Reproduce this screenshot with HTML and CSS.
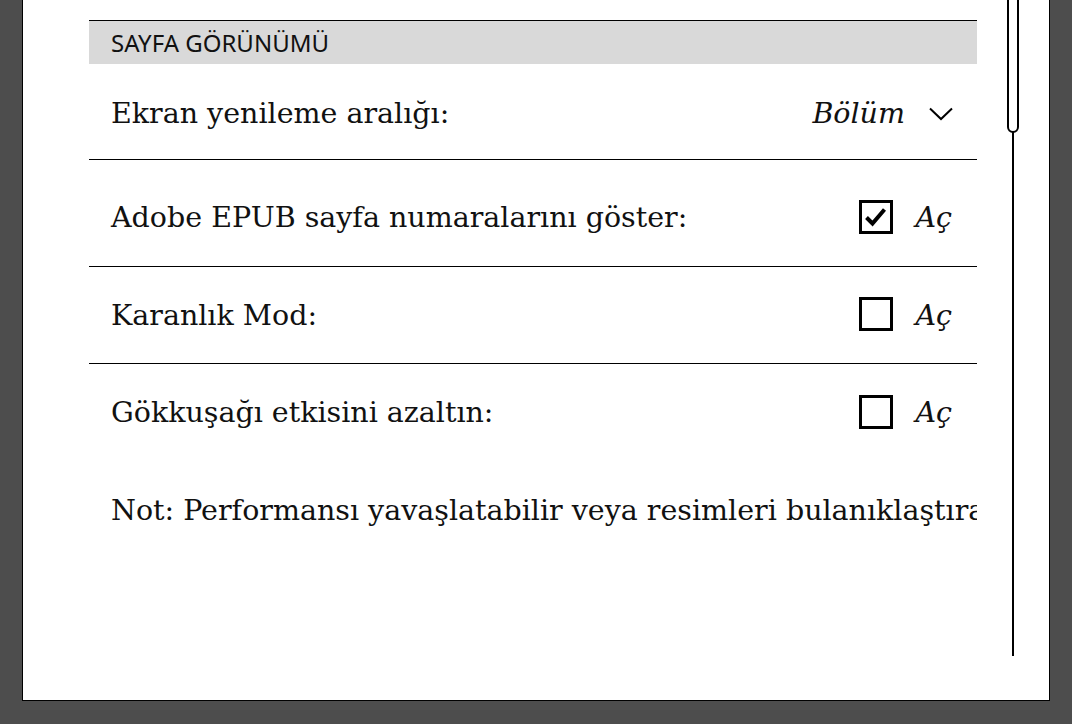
FILE: index.html
```
<!DOCTYPE html>
<html lang="tr">
<head>
    <meta charset="UTF-8" />
    <title>Sayfa Görünümü</title>
    <link rel="stylesheet" href="styles.css">
</head>
<body>

<div class="panel">
    <div class="content">
        <!-- Section header -->
        <div class="section-head">SAYFA GÖRÜNÜMÜ</div>

        <div class="row row-first">
            <span class="label">Ekran yenileme aralığı:</span>
            <span class="select">
                <span class="value">Bölüm</span>
                <svg class="chevron" width="24" height="14" viewBox="0 0 24 14">
                    <polyline points="1,1.5 12,12 23,1.5" fill="none" stroke="#000" stroke-width="2"/>
                </svg>
            </span>
        </div>

        <div class="row row-tall">
            <span class="label">Adobe EPUB sayfa numaralarını göster:</span>
            <span class="toggle">
                <span class="box">
                    <svg width="28" height="28" viewBox="0 0 28 28">
                        <polyline points="4.5,14.5 10.5,20.5 22.5,6.5" fill="none" stroke="#000" stroke-width="4"/>
                    </svg>
                </span>
                <span class="value">Aç</span>
            </span>
        </div>

        <div class="row">
            <span class="label">Karanlık Mod:</span>
            <span class="toggle">
                <span class="box"></span>
                <span class="value">Aç</span>
            </span>
        </div>

        <div class="row no-line">
            <span class="label">Gökkuşağı etkisini azaltın:</span>
            <span class="toggle">
                <span class="box"></span>
                <span class="value">Aç</span>
            </span>
        </div>

        <div class="note">Not: Performansı yavaşlatabilir veya resimleri bulanıklaştırabilir.</div>
    </div>

    <!-- Scroll indicator -->
    <div class="scroll">
        <div class="thumb"></div>
        <div class="track"></div>
    </div>
</div>

</body>
</html>
```

FILE: styles.css
```
html, body {
    margin: 0;
    height: 100%;
    background-color: #4d4d4d;
    overflow: hidden;
}
.panel {
    display: flex;
    margin-left: 22px;
    width: 1026px;
    height: 700px;
    background-color: #fff;
    border: 1px solid #000;
    border-top: none;
}
.content {
    width: 888px;
    margin-left: 66px;
    padding-top: 20px;
    overflow: hidden;
    font-family: "DejaVu Serif", serif;
    font-size: 28.5px;
    color: #111;
}
.section-head {
    height: 43px;
    border-top: 1px solid #000;
    background-color: #d9d9d9;
    padding-left: 22px;
    font-family: "Noto Sans", sans-serif;
    font-size: 24px;
    line-height: 44px;
    color: #111;
}
.row {
    display: flex;
    align-items: center;
    justify-content: space-between;
    box-sizing: border-box;
    height: 97px;
    padding: 0 25px 0 22px;
    border-bottom: 1px solid #000;
}
.row-first {
    height: 96px;
    padding-top: 4px;
}
.row-tall {
    height: 107px;
    padding-top: 9px;
}
.no-line {
    border-bottom: none;
}
.label {
    white-space: nowrap;
}
.select, .toggle {
    display: flex;
    align-items: center;
}
.value {
    font-style: italic;
}
.chevron {
    margin-left: 24px;
    margin-right: -1px;
}
.box {
    display: flex;
    align-items: center;
    justify-content: center;
    width: 28px;
    height: 28px;
    border: 3px solid #000;
    margin-right: 22px;
    margin-top: -2px;
}
.note {
    padding: 33px 0 0 22px;
    white-space: nowrap;
}
.scroll {
    position: relative;
    width: 12px;
    margin-left: 30px;
    height: 656px;
}
.track {
    position: absolute;
    left: 5px;
    top: 0;
    width: 2px;
    height: 656px;
    background-color: #000;
}
.thumb {
    position: absolute;
    left: 0;
    top: -20px;
    width: 8px;
    height: 149px;
    border: 2px solid #000;
    border-radius: 0 0 6px 6px;
    background-color: #fff;
    z-index: 1;
}
```
